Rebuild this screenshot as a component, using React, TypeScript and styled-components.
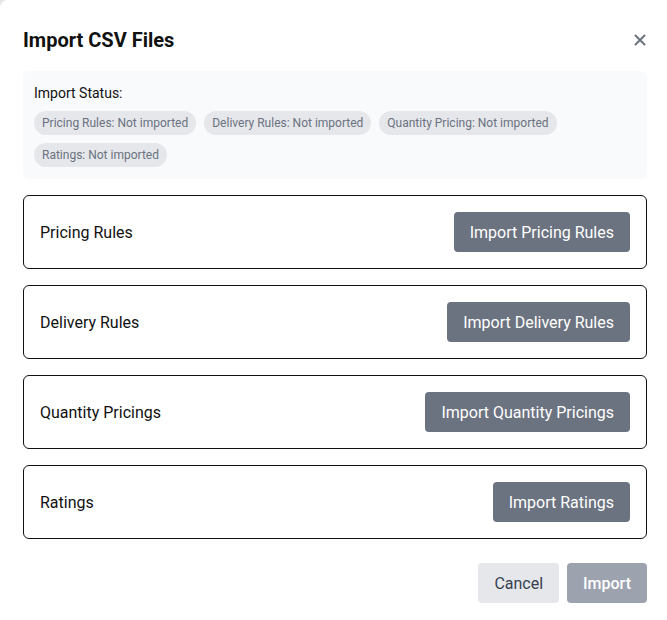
import React from "react";
import styled, { createGlobalStyle } from "styled-components";

const Global = createGlobalStyle`
  html, body { margin: 0; padding: 0; background: #e5e7eb; }
  body { font-family: Roboto, "Liberation Sans", sans-serif; color: #111827; }
  * { box-sizing: border-box; }
`;

const Dialog = styled.div`
  width: 667px;
  min-height: 620px;
  background: #ffffff;
  border-radius: 8px 0 0 0;
  padding: 24px 20px 24px 23px;
  display: flex;
  flex-direction: column;
`;

const Header = styled.div`
  display: flex;
  align-items: center;
  justify-content: space-between;
  height: 32px;
  margin-bottom: 15px;
`;

const Title = styled.h2`
  margin: 0;
  font-size: 20px;
  font-weight: 700;
  line-height: 32px;
  color: #111111;
`;

const CloseButton = styled.button`
  border: none;
  background: transparent;
  padding: 0;
  width: 20px;
  height: 20px;
  display: flex;
  align-items: center;
  justify-content: center;
  color: #6b7280;
  margin-right: -3px;
  cursor: pointer;
`;

const StatusBox = styled.div`
  background: #f9fafb;
  border-radius: 6px;
  padding: 12px 11px;
  display: flex;
  flex-direction: column;
  gap: 8px;
  margin-bottom: 16px;
`;

const StatusLabel = styled.div`
  font-size: 14px;
  font-weight: 400;
  line-height: 20px;
  color: #111111;
`;

const Pills = styled.div`
  display: flex;
  flex-wrap: wrap;
  gap: 8px;
`;

const Pill = styled.span`
  display: inline-flex;
  align-items: center;
  height: 24px;
  padding: 0 8px;
  border-radius: 12px;
  background: #e5e7eb;
  color: #6b7280;
  font-size: 12px;
`;

const Cards = styled.div`
  display: flex;
  flex-direction: column;
  gap: 16px;
`;

const Card = styled.div`
  border: 1px solid #111111;
  border-radius: 6px;
  padding: 16px;
  display: flex;
  align-items: center;
  justify-content: space-between;
`;

const CardLabel = styled.span`
  font-size: 16px;
  font-weight: 400;
  color: #111111;
`;

const Button = styled.button<{ $variant: "primary" | "secondary" | "disabled" }>`
  height: 40px;
  padding: 0 16px;
  border: none;
  border-radius: 4px;
  font-family: Roboto, "Liberation Sans", sans-serif;
  font-size: 16px;
  font-weight: ${(p) => (p.$variant === "disabled" ? 500 : 400)};
  cursor: pointer;
  background: ${(p) =>
    p.$variant === "primary" ? "#6b7280" : p.$variant === "secondary" ? "#e5e7eb" : "#9ca3af"};
  color: ${(p) => (p.$variant === "secondary" ? "#374151" : "#ffffff")};
`;

const Footer = styled.div`
  display: flex;
  justify-content: flex-end;
  gap: 8px;
  margin-top: 24px;
`;

const statuses = [
  "Pricing Rules: Not imported",
  "Delivery Rules: Not imported",
  "Quantity Pricing: Not imported",
  "Ratings: Not imported",
];

const sections = [
  { label: "Pricing Rules", action: "Import Pricing Rules" },
  { label: "Delivery Rules", action: "Import Delivery Rules" },
  { label: "Quantity Pricings", action: "Import Quantity Pricings" },
  { label: "Ratings", action: "Import Ratings" },
];

export default function App() {
  return (
    <>
      <Global />
      <Dialog>
        <Header>
          <Title>Import CSV Files</Title>
          <CloseButton aria-label="Close">
            <svg width="12" height="12" viewBox="0 0 12 12" fill="none" stroke="currentColor" strokeWidth="2" strokeLinecap="round">
              <path d="M1.5 1.5 L10.5 10.5 M10.5 1.5 L1.5 10.5" />
            </svg>
          </CloseButton>
        </Header>
        <StatusBox>
          <StatusLabel>Import Status:</StatusLabel>
          <Pills>
            {statuses.map((s) => (
              <Pill key={s}>{s}</Pill>
            ))}
          </Pills>
        </StatusBox>
        <Cards>
          {sections.map((s) => (
            <Card key={s.label}>
              <CardLabel>{s.label}</CardLabel>
              <Button $variant="primary">{s.action}</Button>
            </Card>
          ))}
        </Cards>
        <Footer>
          <Button $variant="secondary">Cancel</Button>
          <Button $variant="disabled">Import</Button>
        </Footer>
      </Dialog>
    </>
  );
}
